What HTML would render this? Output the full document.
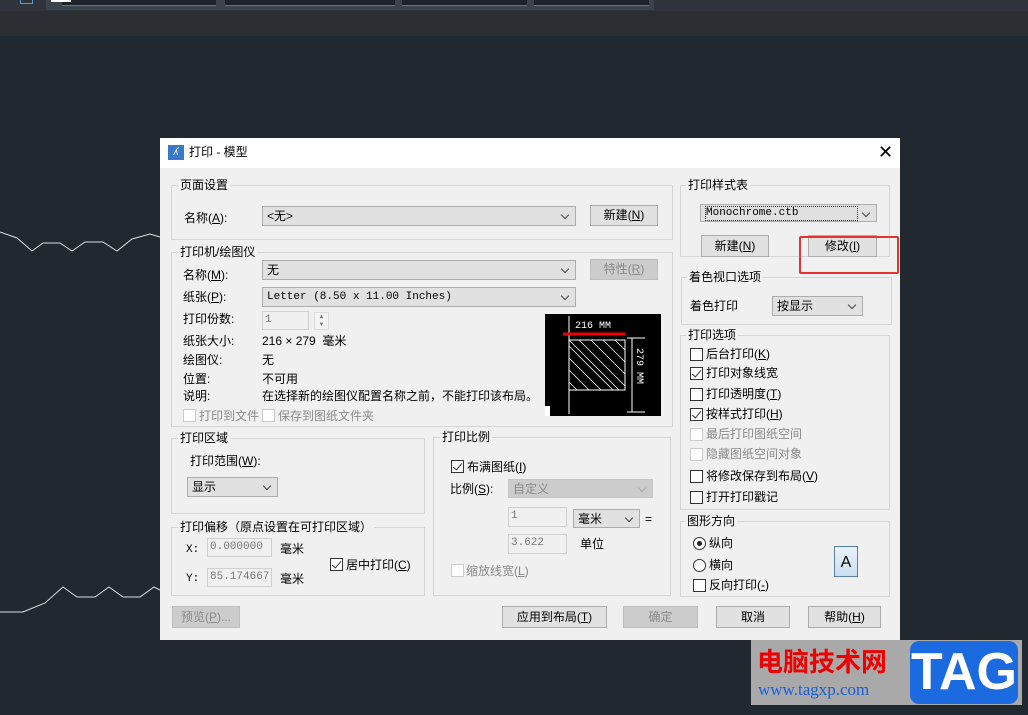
<!DOCTYPE html>
<html><head><meta charset="utf-8"><style>
*{margin:0;padding:0;box-sizing:border-box}
body{width:1028px;height:715px;overflow:hidden;background:#212830;position:relative;font-family:"Liberation Sans","Noto Sans CJK SC",sans-serif;font-size:12px;color:#000}
.a{position:absolute;white-space:nowrap}
.t{position:absolute;white-space:nowrap;line-height:14px;font-size:12px}
.g{position:absolute;border:1px solid #d5d5d5}
.gl{position:absolute;background:#f0f0f0;padding:0 2px;line-height:14px;font-size:12px;white-space:nowrap}
.cb{position:absolute;background:#e1e1e1;border:1px solid #adadad;font-size:12px;line-height:18px;padding-left:4px}
.cb:after{content:"";position:absolute;right:7px;top:5px;width:5px;height:5px;border-right:1px solid #444;border-bottom:1px solid #444;transform:rotate(45deg)}
.cb.d{color:#8a8a8a;background:#cccccc;border-color:#c5c5c5}
.cb.d:after{border-color:#aaa}
.bt{position:absolute;background:#e1e1e1;border:1px solid #adadad;text-align:center;font-size:12px;line-height:19px}
.bt.d{color:#8a8a8a;background:#cccccc;border-color:#bfbfbf}
.in{position:absolute;background:#f0f0f0;border:1px solid #d0d0d0;font-size:11px;color:#777;padding-left:2px;line-height:17px;font-family:"Liberation Mono",monospace}
.ck{position:absolute;width:13px;height:13px;border:1px solid #333;background:#fff}
.ck.on:after{content:"";position:absolute;left:3px;top:0px;width:4px;height:8px;border-right:1px solid #333;border-bottom:1px solid #333;transform:rotate(40deg)}
.ck.d{border-color:#ccc}
.gr{color:#8a8a8a}
.mono{font-family:"Liberation Mono",monospace;font-size:11px}
</style></head><body>
<div class="a" style="left:0;top:0;width:1028px;height:11px;background:#2f343c"></div>
<div class="a" style="left:0;top:11px;width:1028px;height:25px;background:#2b2e33"></div>
<div class="a" style="left:46px;top:0;width:608px;height:10px;background:#3c434d"></div>
<div class="a" style="left:62px;top:0;width:154px;height:6px;background:#1d222b;border-bottom:1px solid #6a717a"></div>
<div class="a" style="left:225px;top:0;width:170px;height:6px;background:#1d222b;border-bottom:1px solid #6a717a"></div>
<div class="a" style="left:402px;top:0;width:125px;height:6px;background:#1d222b;border-bottom:1px solid #6a717a"></div>
<div class="a" style="left:534px;top:0;width:115px;height:6px;background:#1d222b;border-bottom:1px solid #6a717a"></div>
<div class="a" style="left:51px;top:0;width:20px;height:2px;background:#fff"></div>
<div class="a" style="left:20px;top:0;width:13px;height:4px;border:1px solid #5b9bd5;border-top:0"></div>
<svg class="a" style="left:0;top:0" width="170" height="715"><polyline fill="none" stroke="#ddd" stroke-width="1" points="0,232 17,238 32,251 43,243 60,243 72,251 85,242 103,242 117,251 132,239 150,234 160,237"/><polyline fill="none" stroke="#ddd" stroke-width="1" points="0,612 23,612 45,603 63,587 77,597 95,597 109,587 123,597 140,597 154,587 160,590"/></svg>

<!-- dialog -->
<div class="a" style="left:160px;top:138px;width:740px;height:502px;background:#f0f0f0"></div>
<div class="a" style="left:160px;top:138px;width:740px;height:30px;background:#fff"></div>
<div class="a" style="left:168px;top:145px;width:16px;height:15px;background:#3a78c9;color:#fff;font-size:10px;line-height:15px;text-align:center;font-style:italic">ʎ</div>
<div class="t" style="left:189px;top:145px;font-size:12px">打印 - 模型</div>
<div class="t" style="left:878px;top:142px;font-size:18px;line-height:20px">✕</div>

<!-- 页面设置 -->
<div class="g" style="left:171px;top:185px;width:502px;height:55px"></div>
<div class="gl" style="left:178px;top:178px">页面设置</div>
<div class="t" style="left:184px;top:211px">名称(<u>A</u>):</div>
<div class="cb" style="left:262px;top:206px;width:314px;height:20px">&lt;无&gt;</div>
<div class="bt" style="left:590px;top:205px;width:68px;height:21px">新建(<u>N</u>)</div>

<!-- 打印机 -->
<div class="g" style="left:171px;top:252px;width:502px;height:175px"></div>
<div class="gl" style="left:178px;top:245px">打印机/绘图仪</div>
<div class="t" style="left:183px;top:268px">名称(<u>M</u>):</div>
<div class="cb" style="left:262px;top:260px;width:314px;height:20px">无</div>
<div class="bt d" style="left:590px;top:259px;width:68px;height:21px">特性(<u>R</u>)</div>
<div class="t" style="left:183px;top:290px">纸张(<u>P</u>):</div>
<div class="cb mono" style="left:262px;top:287px;width:314px;height:20px">Letter (8.50 x 11.00 Inches)</div>
<div class="t" style="left:183px;top:312px">打印份数:</div>
<div class="in" style="left:262px;top:311px;width:47px;height:19px">1</div>
<div class="a" style="left:314px;top:312px;width:15px;height:18px;border:1px solid #ddd;background:#f4f4f4;font-size:6px;line-height:8px;text-align:center;color:#777">▲<br>▼</div>
<div class="t" style="left:183px;top:334px">纸张大小:</div>
<div class="t" style="left:262px;top:334px">216 × 279 &nbsp;毫米</div>
<div class="t" style="left:183px;top:353px">绘图仪:</div>
<div class="t" style="left:262px;top:353px">无</div>
<div class="t" style="left:183px;top:372px">位置:</div>
<div class="t" style="left:262px;top:372px">不可用</div>
<div class="t" style="left:183px;top:389px">说明:</div>
<div class="t" style="left:262px;top:389px">在选择新的绘图仪配置名称之前，不能打印该布局。</div>
<div class="ck d" style="left:183px;top:409px"></div><div class="t gr" style="left:199px;top:409px">打印到文件</div>
<div class="ck d" style="left:262px;top:409px"></div><div class="t gr" style="left:278px;top:409px">保存到图纸文件夹</div>
<svg class="a" style="left:545px;top:314px" width="116" height="102">
<rect x="0" y="0" width="116" height="102" fill="#fff"/>
<rect x="5" y="0" width="111" height="102" fill="#000"/>
<rect x="0" y="0" width="17" height="92" fill="#000"/>
<rect x="24" y="26" width="56" height="50" fill="none" stroke="#fff"/>
<g stroke="#fff" stroke-width="0.8"><line x1="24" y1="32" x2="68" y2="76"/><line x1="24" y1="44" x2="56" y2="76"/><line x1="24" y1="56" x2="44" y2="76"/><line x1="24" y1="68" x2="32" y2="76"/><line x1="34" y1="26" x2="80" y2="72"/><line x1="46" y1="26" x2="80" y2="60"/><line x1="58" y1="26" x2="80" y2="48"/><line x1="70" y1="26" x2="80" y2="36"/><line x1="24" y1="26" x2="74" y2="76"/></g>
<line x1="24" y1="2" x2="24" y2="100" stroke="#fff"/>
<line x1="82" y1="24" x2="100" y2="24" stroke="#fff"/><line x1="82" y1="98" x2="100" y2="98" stroke="#fff"/>
<line x1="87" y1="24" x2="87" y2="98" stroke="#fff"/>
<line x1="18" y1="20" x2="80" y2="20" stroke="#e00" stroke-width="3"/>
<text x="30" y="14" fill="#fff" font-size="10" font-family="Liberation Mono">216 MM</text>
<text x="92" y="34" fill="#fff" font-size="10" font-family="Liberation Mono" transform="rotate(90 92 34)">279 MM</text>
</svg>

<!-- 打印区域 -->
<div class="g" style="left:171px;top:438px;width:254px;height:76px"></div>
<div class="gl" style="left:178px;top:431px">打印区域</div>
<div class="t" style="left:190px;top:454px">打印范围(<u>W</u>):</div>
<div class="cb" style="left:187px;top:477px;width:91px;height:20px">显示</div>

<div class="g" style="left:171px;top:527px;width:254px;height:69px"></div>
<div class="gl" style="left:178px;top:520px">打印偏移（原点设置在可打印区域）</div>
<div class="t mono" style="left:186px;top:543px">X:</div>
<div class="in" style="left:207px;top:538px;width:65px;height:19px">0.000000</div>
<div class="t" style="left:280px;top:542px">毫米</div>
<div class="t mono" style="left:186px;top:572px">Y:</div>
<div class="in" style="left:207px;top:568px;width:65px;height:19px">85.174667</div>
<div class="t" style="left:280px;top:572px">毫米</div>
<div class="ck on" style="left:330px;top:558px"></div><div class="t" style="left:346px;top:558px">居中打印(<u>C</u>)</div>

<!-- 打印比例 -->
<div class="g" style="left:433px;top:437px;width:238px;height:159px"></div>
<div class="gl" style="left:440px;top:430px">打印比例</div>
<div class="ck on" style="left:451px;top:460px"></div><div class="t" style="left:467px;top:460px">布满图纸(<u>I</u>)</div>
<div class="t" style="left:450px;top:482px">比例(<u>S</u>):</div>
<div class="cb d" style="left:508px;top:479px;width:145px;height:19px">自定义</div>
<div class="in" style="left:508px;top:507px;width:59px;height:20px">1</div>
<div class="cb" style="left:573px;top:509px;width:67px;height:19px">毫米</div>
<div class="t" style="left:645px;top:512px">=</div>
<div class="in" style="left:508px;top:534px;width:59px;height:20px">3.622</div>
<div class="t" style="left:580px;top:537px">单位</div>
<div class="ck d" style="left:451px;top:564px"></div><div class="t gr" style="left:466px;top:564px">缩放线宽(<u>L</u>)</div>

<!-- 打印样式表 -->
<div class="g" style="left:680px;top:185px;width:210px;height:72px"></div>
<div class="gl" style="left:686px;top:178px">打印样式表</div>
<div class="cb mono" style="left:700px;top:204px;width:177px;height:18px;line-height:16px"><span style="border:1px dotted #333;display:inline-block;width:153px;line-height:13px">Monochrome.ctb</span></div>
<div class="bt" style="left:701px;top:235px;width:68px;height:22px;line-height:20px">新建(<u>N</u>)</div>
<div class="bt" style="left:808px;top:235px;width:69px;height:22px;line-height:20px">修改(<u>I</u>)</div>
<div class="a" style="left:799px;top:236px;width:100px;height:38px;border:2px solid #e8322f;border-radius:2px"></div>

<div class="g" style="left:681px;top:277px;width:211px;height:48px"></div>
<div class="gl" style="left:687px;top:270px">着色视口选项</div>
<div class="t" style="left:690px;top:299px">着色打印</div>
<div class="cb" style="left:772px;top:296px;width:91px;height:20px">按显示</div>

<div class="g" style="left:680px;top:335px;width:210px;height:175px"></div>
<div class="gl" style="left:686px;top:328px">打印选项</div>
<div class="ck" style="left:690px;top:348px"></div><div class="t" style="left:706px;top:347px">后台打印(<u>K</u>)</div>
<div class="ck on" style="left:690px;top:367px"></div><div class="t" style="left:706px;top:366px">打印对象线宽</div>
<div class="ck" style="left:690px;top:388px"></div><div class="t" style="left:706px;top:387px">打印透明度(<u>T</u>)</div>
<div class="ck on" style="left:690px;top:408px"></div><div class="t" style="left:706px;top:407px">按样式打印(<u>H</u>)</div>
<div class="ck d" style="left:690px;top:428px"></div><div class="t gr" style="left:706px;top:427px">最后打印图纸空间</div>
<div class="ck d" style="left:690px;top:448px"></div><div class="t gr" style="left:706px;top:447px">隐藏图纸空间对象</div>
<div class="ck" style="left:690px;top:470px"></div><div class="t" style="left:706px;top:469px">将修改保存到布局(<u>V</u>)</div>
<div class="ck" style="left:690px;top:491px"></div><div class="t" style="left:706px;top:490px">打开打印戳记</div>

<div class="g" style="left:680px;top:521px;width:210px;height:76px"></div>
<div class="gl" style="left:685px;top:514px">图形方向</div>
<div class="a" style="left:693px;top:537px;width:13px;height:13px;border:1px solid #333;border-radius:50%;background:#fff"><div style="position:absolute;left:3px;top:3px;width:5px;height:5px;border-radius:50%;background:#222"></div></div>
<div class="t" style="left:709px;top:536px">纵向</div>
<div class="a" style="left:693px;top:559px;width:13px;height:13px;border:1px solid #333;border-radius:50%;background:#fff"></div>
<div class="t" style="left:709px;top:558px">横向</div>
<div class="ck" style="left:693px;top:579px"></div><div class="t" style="left:709px;top:578px">反向打印(<u>-</u>)</div>
<div class="a" style="left:834px;top:546px;width:24px;height:31px;border:1px solid #5a7fa8;background:linear-gradient(#eaf3fb,#c9dff0);font-size:16px;text-align:center;line-height:31px">A</div>

<!-- buttons -->
<div class="bt d" style="left:172px;top:606px;width:68px;height:22px;line-height:20px">预览(<u>P</u>)...</div>
<div class="bt" style="left:502px;top:606px;width:105px;height:22px;line-height:20px">应用到布局(<u>T</u>)</div>
<div class="bt d" style="left:623px;top:606px;width:75px;height:22px;line-height:20px">确定</div>
<div class="bt" style="left:716px;top:606px;width:74px;height:22px;line-height:20px">取消</div>
<div class="bt" style="left:808px;top:606px;width:73px;height:22px;line-height:20px">帮助(<u>H</u>)</div>

<!-- watermark -->
<div class="a" style="left:751px;top:640px;width:157px;height:65px;background:#a9a9a9"></div>
<div class="t" style="left:757px;top:646px;font-size:26px;line-height:30px;color:#e00;font-weight:bold;font-family:'Noto Sans CJK SC',sans-serif">电脑技术网</div>
<div class="t" style="left:758px;top:680px;font-size:17px;line-height:20px;color:#1a5fd8;font-family:'Liberation Serif',serif">www.tagxp.com</div>
<div class="a" style="left:908px;top:640px;width:114px;height:65px;background:#a9a9a9"></div>
<div class="a" style="left:910px;top:641px;width:108px;height:63px;background:#1c6ae0;border-radius:9px;color:#fff;font-size:52px;font-weight:bold;line-height:63px;text-align:center">TAG</div>
</body></html>
